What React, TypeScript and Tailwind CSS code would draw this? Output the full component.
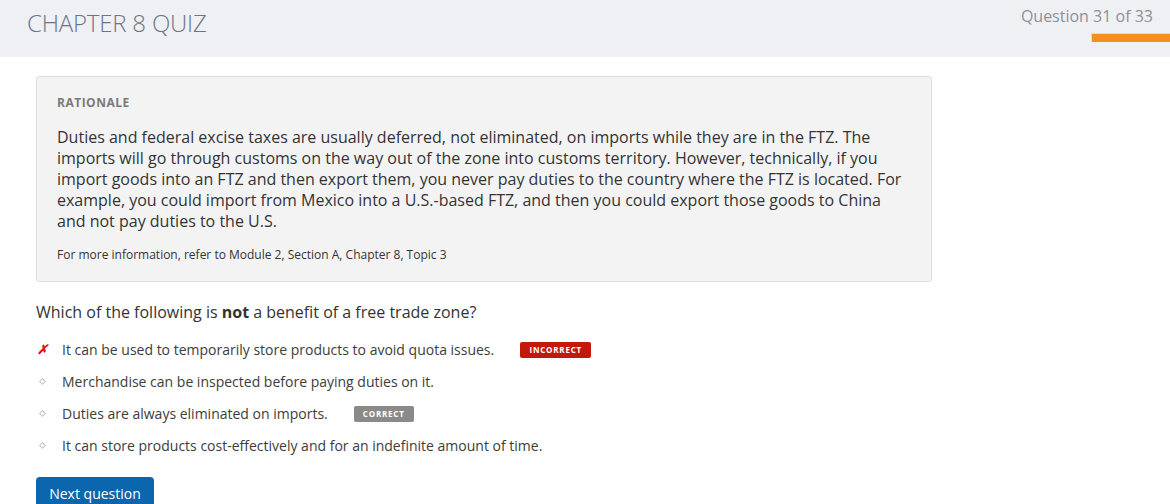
import React from "react";

const options = [
  { text: "It can be used to temporarily store products to avoid quota issues.", mark: "wrong", badge: "INCORRECT" },
  { text: "Merchandise can be inspected before paying duties on it.", mark: "none" },
  { text: "Duties are always eliminated on imports.", mark: "none", badge: "CORRECT" },
  { text: "It can store products cost-effectively and for an indefinite amount of time.", mark: "none" },
];

const rationaleLines = [
  "Duties and federal excise taxes are usually deferred, not eliminated, on imports while they are in the FTZ. The",
  "imports will go through customs on the way out of the zone into customs territory. However, technically, if you",
  "import goods into an FTZ and then export them, you never pay duties to the country where the FTZ is located. For",
  "example, you could import from Mexico into a U.S.-based FTZ, and then you could export those goods to China",
  "and not pay duties to the U.S.",
];

export default function App() {
  return (
    <div className="w-[1170px] h-[504px] overflow-hidden bg-white text-[#333]" style={{ fontFamily: '"Open Sans", sans-serif' }}>
      {/* Cabecera */}
      <div className="h-[57px] bg-[#eff0f4] flex justify-between">
        <h1 className="pl-[27px] pt-[5px] text-[24px] font-light text-[#6a7686] tracking-[-0.2px]">CHAPTER 8 QUIZ</h1>
        <div className="flex flex-col items-end pt-[5px]">
          <span className="pr-[17px] text-[16px] text-[#8c9097] leading-[22px]">Question 31 of 33</span>
          <div className="mt-[6px] w-[79px] h-[9px] bg-[#f3901d] border-l border-t border-[#d9d9d9]" />
        </div>
      </div>

      {/* Rationale */}
      <div className="ml-[36px] mt-[19px] w-[896px] h-[206px] bg-[#f3f3f3] border border-[#dedede] rounded-[3px] px-[20px] pt-[18px]">
        <p className="text-[12px] font-bold text-[#7a7a7a] leading-[16px] tracking-[0.5px]">RATIONALE</p>
        <p className="mt-[16px] text-[16px] leading-[21px] text-[#333] whitespace-nowrap">
          {rationaleLines.map((line, i) => (
            <React.Fragment key={i}>
              {line}
              {i < rationaleLines.length - 1 && <br />}
            </React.Fragment>
          ))}
        </p>
        <p className="mt-[15px] text-[12px] leading-[16px] text-[#333]">For more information, refer to Module 2, Section A, Chapter 8, Topic 3</p>
      </div>

      {/* Pregunta */}
      <p className="ml-[36px] mt-[19px] text-[16px] leading-[22px]">
        Which of the following is <b>not</b> a benefit of a free trade zone?
      </p>

      <div className="ml-[36px] mt-[17px] flex flex-col gap-[13px]">
        {options.map((o) => (
          <div key={o.text} className="flex items-center h-[19px]">
            <span className="w-[26px] flex justify-start pl-[1px]">
              {o.mark === "wrong" ? (
                <span className="text-[#e0141e] text-[13px] font-bold italic">✗</span>
              ) : (
                <span className="w-[5px] h-[5px] ml-[3px] rotate-45 border border-[#c4c4c4]" />
              )}
            </span>
            <span className="text-[14px] text-[#3c3c3c]">{o.text}</span>
            {o.badge === "INCORRECT" && (
              <span className="ml-[26px] w-[71px] h-[16px] flex items-center justify-center bg-[#c4180b] rounded-[2px] text-white text-[8px] font-bold tracking-[0.8px]">INCORRECT</span>
            )}
            {o.badge === "CORRECT" && (
              <span className="ml-[26px] w-[60px] h-[16px] flex items-center justify-center bg-[#8a8a8a] rounded-[2px] text-white text-[8px] font-bold tracking-[0.8px]">CORRECT</span>
            )}
          </div>
        ))}
      </div>

      <button type="button" className="ml-[36px] mt-[22px] w-[118px] h-[34px] bg-[#0b66ae] rounded-[4px] text-white text-[14px] pb-[2px]">
        Next question
      </button>
    </div>
  );
}
